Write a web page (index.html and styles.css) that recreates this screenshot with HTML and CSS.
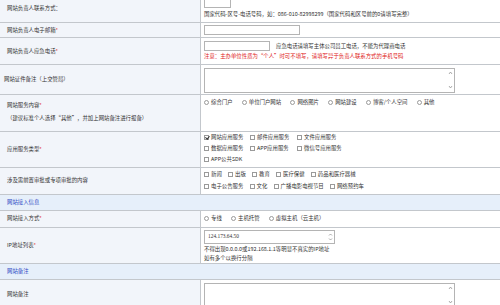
FILE: index.html
```html
<!DOCTYPE html>
<html lang="zh-CN">
<head>
<meta charset="UTF-8">
<title>网站信息</title>
<link rel="stylesheet" href="styles.css">
</head>
<body>
<div class="form">
    <div class="row">
        <div class="lbl"><span>网站负责人联系方式：</span></div>
        <div class="val">
            <input type="text" class="inp w-tiny">
            <div class="tip">国家代码-区号-电话号码，如：086-010-82998299（国家代码和区号前的0请填写完整）</div>
        </div>
    </div>
    <div class="row">
        <div class="lbl"><span>网站负责人电子邮箱<span class="req">*</span></span></div>
        <div class="val val-one"><input type="text" class="inp w-mid"></div>
    </div>
    <div class="row">
        <div class="lbl"><span>网站负责人应急电话<span class="req">*</span></span></div>
        <div class="val">
            <div class="line">
                <input type="text" class="inp w-short">
                <span class="tip">应急电话请填写主体公司员工电话，不能为代理商电话</span>
            </div>
            <div class="tip warn">注意：主办单位性质为“个人”时可不填写，请填写异于负责人联系方式的手机号码</div>
        </div>
    </div>
    <div class="row">
        <div class="lbl lbl-tight"><span>网站证件备注（上交管局）</span></div>
        <div class="val val-area">
            <div class="area-wrap">
                <textarea class="area"></textarea>
                <svg class="arrows" width="5" height="20" viewBox="0 0 5 20"><path d="M1 4 L2.5 2 L4 4 M1 16 L2.5 18 L4 16" fill="none" stroke="#8a8a8a" stroke-width="0.7"/></svg>
            </div>
        </div>
    </div>
    <div class="row">
        <div class="lbl lbl-two">
            <div>
                <div>网站服务内容<span class="req">*</span></div>
                <div>（建议标准个人选择“其他”，并加上网站备注进行报备）</div>
            </div>
        </div>
        <div class="val">
            <label class="opt opt-r"><input type="radio" name="svc">综合门户</label>
            <label class="opt opt-r"><input type="radio" name="svc">单位门户网站</label>
            <label class="opt opt-r"><input type="radio" name="svc">网络图片</label>
            <label class="opt opt-r"><input type="radio" name="svc">网站建设</label>
            <label class="opt opt-r"><input type="radio" name="svc">博客/个人空间</label>
            <label class="opt opt-r"><input type="radio" name="svc">其他</label>
        </div>
    </div>
    <div class="row">
        <div class="lbl"><span>应用服务类型<span class="req">*</span></span></div>
        <div class="val val-checks">
            <div class="grid3">
                <label class="opt"><input type="checkbox" checked>网站应用服务</label>
                <label class="opt"><input type="checkbox">邮件应用服务</label>
                <label class="opt"><input type="checkbox">文件应用服务</label>
                <label class="opt"><input type="checkbox">数据应用服务</label>
                <label class="opt"><input type="checkbox">APP应用服务</label>
                <label class="opt"><input type="checkbox">微信号应用服务</label>
                <label class="opt"><input type="checkbox">APP公共SDK</label>
            </div>
        </div>
    </div>
    <div class="row">
        <div class="lbl"><span>涉及需前置审批或专项审批的内容</span></div>
        <div class="val val-checks2">
            <div>
                <label class="opt"><input type="checkbox">新闻</label>
                <label class="opt"><input type="checkbox">出版</label>
                <label class="opt"><input type="checkbox">教育</label>
                <label class="opt"><input type="checkbox">医疗保健</label>
                <label class="opt"><input type="checkbox">药品和医疗器械</label>
            </div>
            <div>
                <label class="opt"><input type="checkbox">电子公告服务</label>
                <label class="opt"><input type="checkbox">文化</label>
                <label class="opt"><input type="checkbox">广播电影电视节目</label>
                <label class="opt"><input type="checkbox">网络预约车</label>
            </div>
        </div>
    </div>
    <div class="sec">网站接入信息</div>
    <div class="row">
        <div class="lbl"><span>网站接入方式<span class="req">*</span></span></div>
        <div class="val">
            <label class="opt opt-r"><input type="radio" name="acc">专线</label>
            <label class="opt opt-r"><input type="radio" name="acc">主机托管</label>
            <label class="opt opt-r"><input type="radio" name="acc">虚拟主机（云主机）</label>
        </div>
    </div>
    <div class="row">
        <div class="lbl"><span>IP地址列表<span class="req">*</span></span></div>
        <div class="val val-ip">
            <div class="area-wrap ip-wrap">
                <textarea class="area ip">124.173.64.50</textarea>
                <svg class="arrows" width="5" height="10" viewBox="0 0 5 10"><path d="M1 3.5 L2.5 2 L4 3.5 M1 6.5 L2.5 8 L4 6.5" fill="none" stroke="#8a8a8a" stroke-width="0.7"/></svg>
            </div>
            <div class="tip">不得出现0.0.0.0或192.168.1.1等明显不真实的IP地址</div>
            <div class="tip">如有多个以换行分隔</div>
        </div>
    </div>
    <div class="sec">网站备注</div>
    <div class="row">
        <div class="lbl"><span>网站备注</span></div>
        <div class="val val-area">
            <div class="area-wrap">
                <textarea class="area"></textarea>
                <svg class="arrows" width="5" height="20" viewBox="0 0 5 20"><path d="M1 4 L2.5 2 L4 4 M1 16 L2.5 18 L4 16" fill="none" stroke="#8a8a8a" stroke-width="0.7"/></svg>
            </div>
        </div>
    </div>
</div>
</body>
</html>
```

FILE: styles.css
```css
/* scaled-down record form */
body {
    margin: 0;
    background: #fff;
    font-family: "Noto Sans CJK SC", "Noto Sans", sans-serif;
    font-size: 5.4px;
    color: #333;
    overflow: hidden;
}
.form {
    width: 500px;
    margin-top: -5px;
}
.row {
    display: flex;
    border-bottom: 1px solid #c3c7cc;
}
.lbl {
    width: 201px;
    flex: none;
    box-sizing: border-box;
    padding: 0 7px;
    background: #f2f5fa;
    border-right: 1px solid #c3c7cc;
    display: flex;
    align-items: center;
    line-height: 9px;
}
.lbl-tight {
    padding-left: 4px;
}
.lbl-two {
    line-height: 13px;
    padding-top: 4px;
    padding-bottom: 6px;
}
.req {
    color: #e02020;
}
.val {
    flex: 1;
    padding: 3px;
    line-height: 9px;
}
.val-one {
    padding: 2px 3px;
}
.val-area {
    padding: 3px 3px 0.5px;
}
.val-checks {
    padding: 0 3px 2.5px;
    line-height: 11px;
}
.val-checks2 {
    padding: 1px 3px 0.5px;
    line-height: 11px;
}
.val-ip {
    padding: 2px 3px 0.5px;
}
.inp {
    display: block;
    height: 10px;
    box-sizing: border-box;
    border: 1px solid #b4b4b4;
    padding: 0;
    margin: 0;
    background: #fff;
}
.w-tiny { width: 27px; }
.w-mid { width: 96px; }
.w-short { width: 66px; }
.line {
    display: flex;
    align-items: center;
    gap: 6px;
    margin-bottom: 1px;
}
.tip {
    white-space: nowrap;
}
.val > .inp + .tip {
    margin-top: 2px;
}
.warn {
    color: #e02020;
}
.area-wrap {
    position: relative;
    width: 251px;
}
.area {
    display: block;
    width: 100%;
    height: 25px;
    box-sizing: border-box;
    border: 1px solid #b4b4b4;
    margin: 0;
    padding: 1px 2px;
    resize: none;
    overflow: hidden;
    font-family: "Liberation Serif", serif;
    font-size: 5.4px;
    color: #333;
}
.arrows {
    position: absolute;
    top: 2px;
    right: 2px;
}
.ip-wrap {
    width: 131px;
    margin-bottom: 1px;
}
.ip {
    height: 14px;
    padding: 2px 3px;
}
.opt {
    display: inline-flex;
    align-items: center;
    margin-right: 5px;
    white-space: nowrap;
}
.opt-r {
    margin-right: 8px;
}
.opt input {
    appearance: none;
    width: 5px;
    height: 5px;
    margin: 0 2px 0 0;
    border: 1px solid #9a9a9a;
    background: #fff;
    box-sizing: border-box;
    position: relative;
}
.opt input[type="radio"] {
    border-radius: 50%;
}
.opt input[type="checkbox"]:checked::after {
    content: "";
    position: absolute;
    left: 0.5px;
    top: -0.5px;
    width: 1.5px;
    height: 3px;
    border: solid #333;
    border-width: 0 0.8px 0.8px 0;
    transform: rotate(40deg);
}
.grid3 {
    display: grid;
    grid-template-columns: 46px 47px auto;
}
.sec {
    background: #e6effa;
    color: #2b48c4;
    padding: 0 7px;
    line-height: 15px;
    border-bottom: 1px solid #c3c7cc;
}
```
